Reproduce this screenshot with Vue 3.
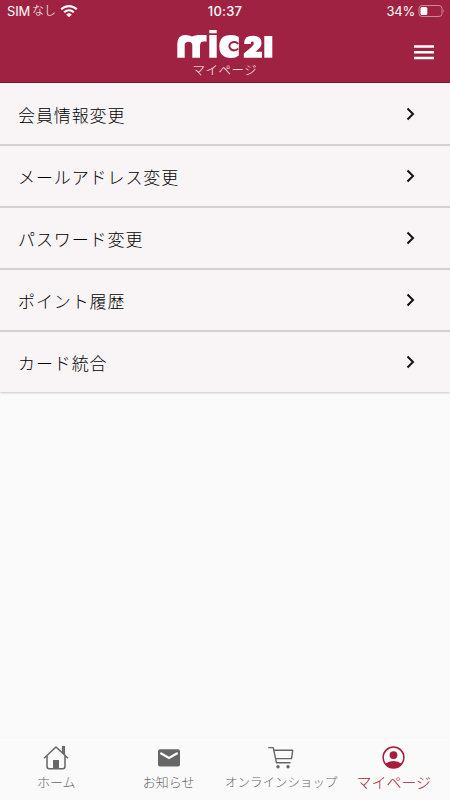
<script setup>
const items = ['会員情報変更', 'メールアドレス変更', 'パスワード変更', 'ポイント履歴', 'カード統合']
</script>

<template>
  <div class="screen">
    <header class="header">
      <div class="status">
        <div class="carrier">
          <span class="sim">SIM</span><span class="none">なし</span>
          <svg class="wifi" width="18" height="14" viewBox="0 0 18 14">
            <path d="M1.2 5.3C5.7 1 12.3 1 16.8 5.3M4.2 8.3C7 5.7 11 5.7 13.8 8.3" fill="none" stroke="#fff" stroke-width="2.2" />
            <path d="M6.2 10.4Q9 8 11.8 10.4L9 13.2Z" fill="#fff" />
          </svg>
        </div>
        <span class="clock">10:37</span>
        <div class="power">
          <span>34%</span>
          <svg width="28" height="14" viewBox="0 0 28 14">
            <rect x="1" y="1.5" width="23" height="11" rx="3" fill="none" stroke="#c98a9b" stroke-width="1" />
            <rect x="2.5" y="3" width="6.8" height="8" rx="1.5" fill="#fff" />
            <path d="M25.5 5.2Q27.2 7 25.5 8.8Z" fill="#c98a9b" />
          </svg>
        </div>
      </div>
      <div class="titlebar">
        <div class="brand">
          <svg class="logo" width="98" height="30" viewBox="0 0 98 30" role="img">
            <g fill="#fff">
              <path d="M1.3 28.7V15Q1.3 5.9 9.5 5.9Q13.5 5.9 16 7.6Q18.5 5.9 22.5 5.9H30.6V12.6H27.5Q24 12.6 24 17V28.7H16.3V16.5Q16.3 12.8 12.5 12.8Q8.7 12.8 8.7 16.5V28.7Z" />
              <path d="M33.3 1H40.7V4.3H33.3ZM33.3 6H40.7V28.7H33.3Z" />
              <path d="M62.8 8V26.5Q60 29 55 29Q43.3 29 43.3 17.3Q43.3 5.9 55 5.9Q60 5.9 62.8 8Z" />
              <path d="M68.3 15Q67.6 6.7 76.6 6.7Q85.5 6.7 85.5 13.9Q85.5 17.4 82 20.4L79.4 22.7H86V28.7H67.8V24.6L75.6 17.9Q78.2 15.6 77.8 13.9Q77.5 12.4 76 12.6Q74.8 12.8 74.8 15Z" />
              <path d="M88.3 7H96.3V28.7H88.3Z" />
            </g>
            <path d="M62.2 14.9A4.8 4.2 0 1 0 62.2 19.5" fill="none" stroke="#a02242" stroke-width="2" />
          </svg>
          <h1>マイページ</h1>
        </div>
        <svg class="menu" width="20" height="15" viewBox="0 0 20 15"><path d="M0 1.5H20M0 7.2H20M0 13H20" stroke="#fff" stroke-width="2.5" /></svg>
      </div>
    </header>
    <main class="list">
      <div v-for="t in items" :key="t" class="row">
        <span>{{ t }}</span>
        <svg width="9" height="14" viewBox="0 0 9 14"><path d="M1.5 1.5L7 7L1.5 12.5" fill="none" stroke="#111" stroke-width="2" /></svg>
      </div>
    </main>
    <nav class="tabs">
      <div class="tab home">
        <svg width="28" height="26" viewBox="0 0 28 26">
          <path d="M2 13.2L14 2L26 13.2M5 11V21.5Q5 23.7 7.2 23.7H20.8Q23 23.7 23 21.5V11M20.7 8V1.8H22.3V9.5" fill="none" stroke="#666" stroke-width="1.5" />
          <path d="M11 15H17V23.5H11Z" fill="#666" />
        </svg>
        <span>ホーム</span>
      </div>
      <div class="tab news">
        <svg width="28" height="26" viewBox="0 0 28 26">
          <rect x="3" y="4.3" width="22" height="17.3" rx="2" fill="#666" />
          <path d="M5.3 8L14 13L22.7 8" fill="none" stroke="#fafafa" stroke-width="2.2" />
        </svg>
        <span>お知らせ</span>
      </div>
      <div class="tab shop">
        <svg width="28" height="26" viewBox="0 0 28 26">
          <path d="M1.2 2.6H6.2L9.5 17.8H23.5M7 5.3H25.7L24.5 13.6H8.7" fill="none" stroke="#666" stroke-width="1.4" stroke-linejoin="round" />
          <circle cx="11" cy="21.7" r="1.7" fill="#666" /><circle cx="21" cy="21.7" r="1.7" fill="#666" />
        </svg>
        <span>オンラインショップ</span>
      </div>
      <div class="tab mine">
        <svg width="28" height="26" viewBox="0 0 28 26">
          <circle cx="13.5" cy="12.5" r="10.4" fill="none" stroke="#a61c3c" stroke-width="1.5" />
          <circle cx="13.5" cy="10.1" r="3.9" fill="#a61c3c" />
          <path d="M5.5 18.8Q8.5 16.1 13.5 16.1Q18.5 16.1 21.5 18.8Q18.5 23.1 13.5 23.1Q8.5 23.1 5.5 18.8Z" fill="#a61c3c" />
        </svg>
        <span>マイページ</span>
      </div>
    </nav>
  </div>
</template>

<style>
body { margin: 0; background: #fafafa; }
</style>

<style scoped>
.screen { height: 800px; display: flex; flex-direction: column; overflow: hidden; background: #fafafa; font-family: "Noto Sans CJK JP", sans-serif; font-weight: 300; }
.header { box-sizing: border-box; height: 83px; flex: none; background: #a02242; color: #fff; border-bottom: 1px solid #8a1230; }
.status { height: 22px; display: grid; grid-template-columns: 1fr auto 1fr; align-items: center; font-family: Inter, "Noto Sans CJK JP", sans-serif; font-size: 13px; line-height: 22px; font-weight: 400; }
.carrier { display: flex; align-items: center; padding-left: 7px; }
.sim { letter-spacing: -.2px; }
.none { font-size: 12px; font-weight: 300; margin-left: 2px; }
.wifi { margin-left: 4px; }
.clock { font-weight: 500; letter-spacing: .2px; }
.power { display: flex; justify-content: flex-end; align-items: center; gap: 3px; padding-right: 4px; letter-spacing: -.2px; }
.titlebar { height: 60px; display: grid; grid-template-columns: 1fr auto 1fr; }
.brand { grid-column: 2; display: flex; flex-direction: column; align-items: center; padding-top: 7px; }
.logo { display: block; }
h1 { margin: 0; font-size: 12.5px; line-height: 21px; font-weight: 300; letter-spacing: .5px; }
.menu { justify-self: end; margin: 23px 16px 0 0; }
.list { flex: none; box-shadow: 0 1px 2px #0003; }
.row { box-sizing: border-box; height: 62px; display: flex; justify-content: space-between; padding: 0 34px 0 18px; align-items: center; font-size: 17px; letter-spacing: .9px; color: #000; background: #f9f5f7; border-bottom: 2px solid #d3cfd2; }
.row:first-child { height: 63px; padding-top: 1px; }
.row:last-child { height: 60px; border-bottom: 0; }
.row svg { margin: 0 1px 0 0; }
.tabs { margin-top: auto; height: 63px; flex: none; box-sizing: border-box; border-top: 1px solid #f5f5f5; display: grid; grid-template-columns: repeat(4, 1fr); color: #666; }
.tab { display: flex; flex-direction: column; align-items: center; padding-top: 7px; font-size: 13px; white-space: nowrap; }
.tab svg { display: block; }
.tab span { line-height: 22px; }
.shop span { font-size: 12.5px; }
.mine { color: #a61c3c; }
.mine span { font-size: 15px; font-weight: 300; }
</style>
